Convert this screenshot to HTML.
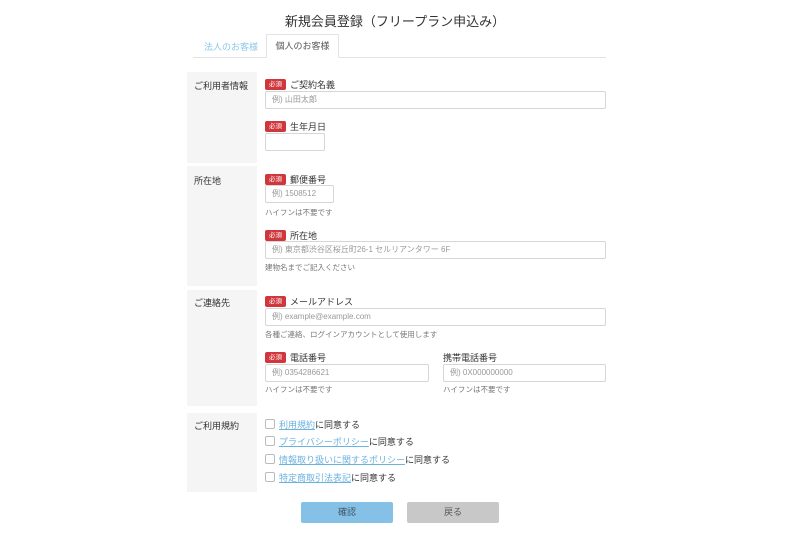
<!DOCTYPE html>
<html><head><meta charset="utf-8"><style>
*{margin:0;padding:0;box-sizing:border-box}
body{width:800px;height:539px;background:#fff;font-family:"Liberation Sans","Noto Sans CJK JP",sans-serif;color:#333;position:relative;overflow:hidden}
.a{position:absolute;white-space:nowrap}
.t{font-size:13px;color:#333}
.g{background:#f5f5f5}
.lab{font-size:9px;color:#333}
.b{position:absolute;background:#d0373d;color:#fff;font-size:6.5px;width:21px;height:11px;line-height:11px;text-align:center;border-radius:2px}
.in{position:absolute;border:1px solid #d6d6d6;border-radius:2px;height:18px;font-size:8px;color:#999;line-height:16px;padding-left:6px}
.h{font-size:7.5px;color:#777}
.cb{position:absolute;width:10px;height:10px;border:1px solid #bbb;border-radius:2px}
.lk{color:#6bb3df;text-decoration:underline}
</style></head><body>
<div class="a t" style="left:0;width:790px;text-align:center;top:11px">新規会員登録（フリープラン申込み）</div>
<div class="a" style="left:193px;top:57px;width:413px;height:1px;background:#e3e3e3"></div>
<div class="a" style="left:204px;top:40px;font-size:9px;color:#8cc5e8">法人のお客様</div>
<div class="a" style="left:266px;top:34px;width:73px;height:24px;border:1px solid #e3e3e3;border-bottom:1px solid #fff;background:#fff;font-size:9px;color:#555;text-align:center;line-height:22px">個人のお客様</div>

<div class="a g" style="left:187px;top:72px;width:70px;height:91px"></div>
<div class="a g" style="left:187px;top:166px;width:70px;height:120px"></div>
<div class="a g" style="left:187px;top:290px;width:70px;height:116px"></div>
<div class="a g" style="left:187px;top:413px;width:70px;height:79px"></div>
<div class="a lab" style="left:194px;top:79px">ご利用者情報</div>
<div class="a lab" style="left:194px;top:174px">所在地</div>
<div class="a lab" style="left:194px;top:296px">ご連絡先</div>
<div class="a lab" style="left:194px;top:419px">ご利用規約</div>

<div class="b" style="left:265px;top:79px">必須</div><div class="a lab" style="left:290px;top:78px">ご契約名義</div>
<div class="in" style="left:265px;top:91px;width:341px">例) 山田太郎</div>
<div class="b" style="left:265px;top:121px">必須</div><div class="a lab" style="left:290px;top:120px">生年月日</div>
<div class="in" style="left:265px;top:133px;width:60px"></div>

<div class="b" style="left:265px;top:174px">必須</div><div class="a lab" style="left:290px;top:173px">郵便番号</div>
<div class="in" style="left:265px;top:185px;width:69px">例) 1508512</div>
<div class="a h" style="left:265px;top:207px">ハイフンは不要です</div>
<div class="b" style="left:265px;top:230px">必須</div><div class="a lab" style="left:290px;top:229px">所在地</div>
<div class="in" style="left:265px;top:241px;width:341px">例) 東京都渋谷区桜丘町26-1 セルリアンタワー 6F</div>
<div class="a h" style="left:265px;top:262px">建物名までご記入ください</div>

<div class="b" style="left:265px;top:296px">必須</div><div class="a lab" style="left:290px;top:295px">メールアドレス</div>
<div class="in" style="left:265px;top:308px;width:341px">例) example@example.com</div>
<div class="a h" style="left:265px;top:329px">各種ご連絡、ログインアカウントとして使用します</div>
<div class="b" style="left:265px;top:352px">必須</div><div class="a lab" style="left:290px;top:351px">電話番号</div>
<div class="a lab" style="left:443px;top:351px">携帯電話番号</div>
<div class="in" style="left:265px;top:364px;width:164px">例) 0354286621</div>
<div class="in" style="left:443px;top:364px;width:163px">例) 0X000000000</div>
<div class="a h" style="left:265px;top:384px">ハイフンは不要です</div>
<div class="a h" style="left:443px;top:384px">ハイフンは不要です</div>

<div class="cb" style="left:265px;top:419px"></div><div class="a lab" style="left:279px;top:418px"><span class="lk">利用規約</span>に同意する</div>
<div class="cb" style="left:265px;top:436px"></div><div class="a lab" style="left:279px;top:435px"><span class="lk">プライバシーポリシー</span>に同意する</div>
<div class="cb" style="left:265px;top:454px"></div><div class="a lab" style="left:279px;top:453px"><span class="lk">情報取り扱いに関するポリシー</span>に同意する</div>
<div class="cb" style="left:265px;top:472px"></div><div class="a lab" style="left:279px;top:471px"><span class="lk">特定商取引法表記</span>に同意する</div>

<div class="a" style="left:301px;top:502px;width:92px;height:21px;background:#85c1e6;border-radius:2px;font-size:9px;color:#456;text-align:center;line-height:21px">確認</div>
<div class="a" style="left:407px;top:502px;width:92px;height:21px;background:#c8c8c8;border-radius:2px;font-size:9px;color:#555;text-align:center;line-height:21px">戻る</div>
</body></html>
